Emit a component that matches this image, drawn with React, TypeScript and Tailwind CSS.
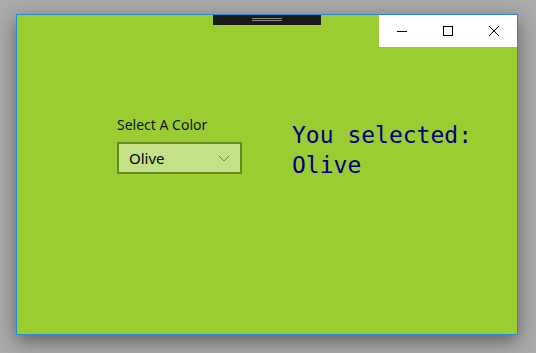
import React from "react";

export default function App() {
  return (
    <div className="w-[536px] h-[353px] bg-[#ababab] overflow-hidden relative">
      <div className="absolute left-[16px] top-[14px] w-[502px] h-[321px] border border-[#2b88d8] bg-[#9acd32] shadow-[0_6px_18px_rgba(0,0,0,0.45)]">
        {/* drag handle bar */}
        <div className="absolute left-[196px] top-0 w-[108px] h-[10px] bg-[#1a1a1a] flex flex-col items-center pt-[3px] gap-[1px]">
          <div className="w-[30px] h-[1px] bg-[#8a8a8a]" />
          <div className="w-[30px] h-[1px] bg-[#8a8a8a]" />
        </div>
        {/* caption buttons */}
        <div className="absolute right-0 top-0 w-[138px] h-[32px] bg-white flex">
          <div className="w-[46px] h-full flex items-center justify-center">
            <svg width="10" height="10" viewBox="0 0 10 10">
              <path d="M0 5.5H10" stroke="#000" strokeWidth="1" />
            </svg>
          </div>
          <div className="w-[46px] h-full flex items-center justify-center">
            <svg width="10" height="10" viewBox="0 0 10 10">
              <rect x="0.5" y="0.5" width="9" height="9" fill="none" stroke="#000" strokeWidth="1" />
            </svg>
          </div>
          <div className="w-[46px] h-full flex items-center justify-center">
            <svg width="10" height="10" viewBox="0 0 10 10">
              <path d="M0 0L10 10M10 0L0 10" stroke="#000" strokeWidth="1" />
            </svg>
          </div>
        </div>

        {/* content */}
        <div className="flex pl-[100px] pt-[100px] gap-[50px]">
          <div className="flex flex-col w-[125px]">
            <div className="text-[14px] leading-[20px] text-[#111] font-['Noto_Sans',sans-serif]">
              Select A Color
            </div>
            <div className="mt-[7px] h-[32px] w-[125px] border-2 border-[#66881e] bg-[#c3e287] flex items-center justify-between pl-[10px] pr-[10px]">
              <span className="text-[15px] leading-[20px] text-black font-['Noto_Sans',sans-serif]">Olive</span>
              <svg width="12" height="7" viewBox="0 0 12 7">
                <path d="M0.5 0.5L6 6L11.5 0.5" fill="none" stroke="#6f8a3a" strokeWidth="1" />
              </svg>
            </div>
          </div>
          <div className="pt-[5px] text-[23px] leading-[30px] text-[#000080] font-['DejaVu_Sans_Mono',monospace]">
            <div>You selected:</div>
            <div>Olive</div>
          </div>
        </div>
      </div>
    </div>
  );
}
